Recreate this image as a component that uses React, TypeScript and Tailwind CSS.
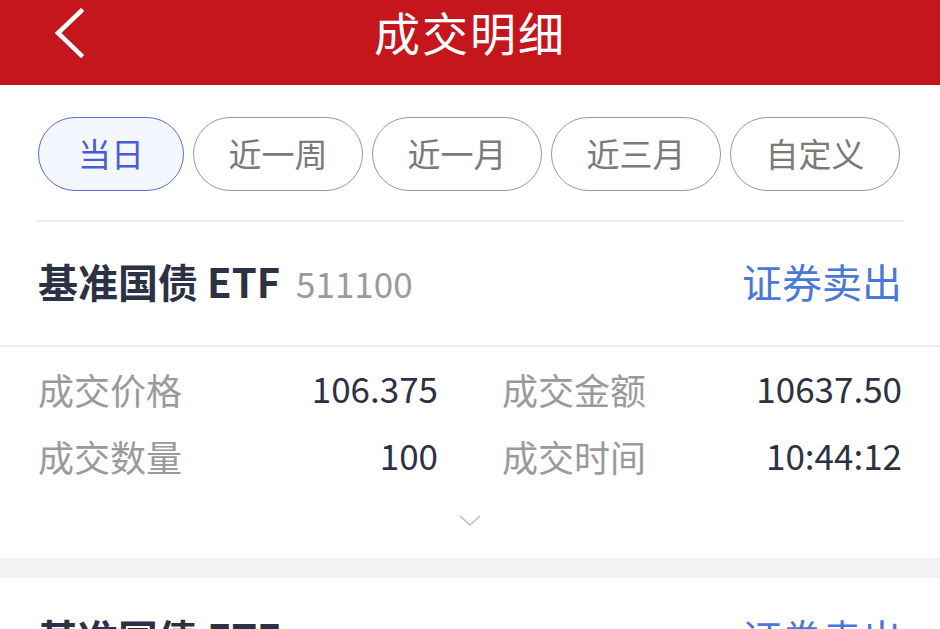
const tabs = ['当日', '近一周', '近一月', '近三月', '自定义'];

const font = { fontFamily: '"Noto Sans CJK SC", "Noto Sans", sans-serif' };

function Detail({ label, value }: { label: string; value: string }) {
  return (
    <div className="flex h-[67px] items-center justify-between">
      <span className="text-[36px] text-[#9a9a9a]">{label}</span>
      <span className="text-[35px] text-[#2d3145]">{value}</span>
    </div>
  );
}

function TradeCard({ expanded }: { expanded: boolean }) {
  return (
    <div className="bg-white">
      <div className="flex h-[123px] items-center justify-between px-[38px] pb-[6px]">
        <div className="flex items-baseline gap-[16px]">
          <span className="text-[40px] font-bold text-[#2d3145]">基准国债 ETF</span>
          <span className="text-[35px] text-[#9b9b9b]">511100</span>
        </div>
        <span className="text-[40px] text-[#4a78d6]">证券卖出</span>
      </div>
      {expanded && (
        <>
          <div className="h-[2px] bg-[#ededed]" />
          <div className="grid grid-cols-2 gap-x-[64px] px-[38px] pt-[8px]">
            <Detail label="成交价格" value="106.375" />
            <Detail label="成交金额" value="10637.50" />
            <Detail label="成交数量" value="100" />
            <Detail label="成交时间" value="10:44:12" />
          </div>
          <div className="flex h-[69px] justify-center pt-[26px]">
            <svg width="22" height="12" viewBox="0 0 22 12" fill="none">
              <polyline points="1,1 11,10 21,1" stroke="#bdbdbd" strokeWidth="1.6" />
            </svg>
          </div>
        </>
      )}
    </div>
  );
}

export default function App() {
  return (
    <div className="h-[629px] w-[940px] overflow-hidden bg-white" style={font}>
      <header className="relative flex h-[85px] items-start justify-center bg-[#c5161d]">
        <svg className="absolute left-[52px] top-[8px]" width="34" height="50" viewBox="0 0 34 50" fill="none">
          <polyline points="29,3 6,25 29,47" stroke="white" strokeWidth="4.5" strokeLinecap="square" />
        </svg>
        <h1 className="mt-[7px] text-[46px] leading-[48px] tracking-[2px] text-white">成交明细</h1>
      </header>

      <div className="flex gap-[9px] px-[38px] pt-[32px]">
        {tabs.map((t, i) =>
          i === 0 ? (
            <div
              key={t}
              className="flex h-[74px] w-[146px] items-center justify-center rounded-full border-[1.5px] border-[#5b6ccf] bg-[#f4f6fe] text-[33px] text-[#4a5dcf]"
            >
              {t}
            </div>
          ) : (
            <div
              key={t}
              className="flex h-[74px] w-[170px] items-center justify-center rounded-full border-[1.5px] border-[#9a9a9a] text-[33px] text-[#7a7a7a]"
            >
              {t}
            </div>
          )
        )}
      </div>

      <div className="mx-[36px] mt-[29px] h-[2px] bg-[#ededed]" />

      <TradeCard expanded />
      <div className="h-[20px] bg-[#f2f2f2]" />
      <TradeCard expanded={false} />
    </div>
  );
}
